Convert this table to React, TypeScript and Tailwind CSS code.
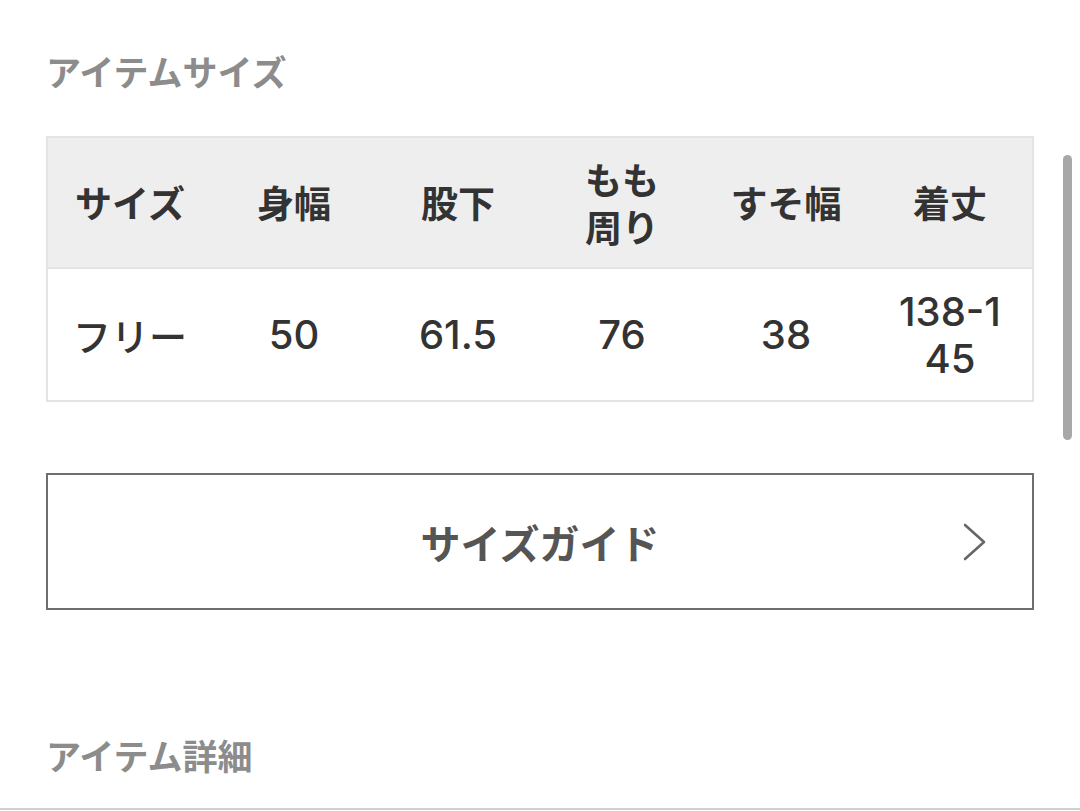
import React from "react";

const headers: React.ReactNode[] = [
    "サイズ",
    "身幅",
    "股下",
    <>
        もも
        <br />
        周り
    </>,
    "すそ幅",
    "着丈",
];

const values: React.ReactNode[] = [
    "50",
    "61.5",
    "76",
    "38",
    <>
        138-1
        <br />
        45
    </>,
];

const font = {
    fontFamily: '"Noto Sans CJK JP", "Noto Sans", sans-serif',
};

const App = () => {
    return (
        <div
            className="relative h-[811px] w-[1080px] overflow-hidden bg-white"
            style={font}
        >
            {/* overlay scrollbar */}
            <div className="absolute right-[8px] top-[155px] h-[285px] w-[9px] rounded-full bg-[#a8a8a8]" />

            <div className="flex flex-col px-[46px] pt-[49px]">
                <h2 className="text-[35px] font-bold leading-[44px] text-[#8c8c8c]">
                    アイテムサイズ
                </h2>

                <div className="mt-[43px] border-2 border-[#e4e4e4]">
                    <div className="grid h-[131px] grid-cols-6 border-b-2 border-[#e4e4e4] bg-[#eeeeee]">
                        {headers.map((h, i) => (
                            <div
                                key={i}
                                className="flex items-center justify-center text-center text-[37px] font-bold leading-[47px] text-[#333333]"
                            >
                                <div>{h}</div>
                            </div>
                        ))}
                    </div>
                    <div className="grid h-[131px] grid-cols-6 bg-white">
                        <div className="flex items-center justify-center text-center text-[38px] font-medium leading-[47px] text-[#333333]">
                            フリー
                        </div>
                        {values.map((v, i) => (
                            <div
                                key={i}
                                className="flex items-center justify-center text-center font-['Inter',sans-serif] text-[40px] font-medium leading-[47px] text-[#333333]"
                            >
                                <div>{v}</div>
                            </div>
                        ))}
                    </div>
                </div>

                <button className="relative mt-[71px] flex h-[137px] items-center justify-center border-2 border-[#6e6e6e] bg-white">
                    <span className="text-[40px] font-bold text-[#555555]">
                        サイズガイド
                    </span>
                    <svg
                        className="absolute right-[44px] top-1/2 -translate-y-1/2"
                        width="26"
                        height="40"
                        viewBox="0 0 26 40"
                        fill="none"
                    >
                        <path
                            d="M3 3 L22 20 L3 37"
                            stroke="#666666"
                            strokeWidth="2.6"
                            strokeLinecap="round"
                            strokeLinejoin="round"
                        />
                    </svg>
                </button>

                <h2 className="mt-[123px] text-[35px] font-bold leading-[44px] text-[#8c8c8c]">
                    アイテム詳細
                </h2>
            </div>

            <div className="absolute bottom-[1px] left-0 h-[2px] w-full bg-[#cfcfcf]" />
        </div>
    );
};

export default App;
